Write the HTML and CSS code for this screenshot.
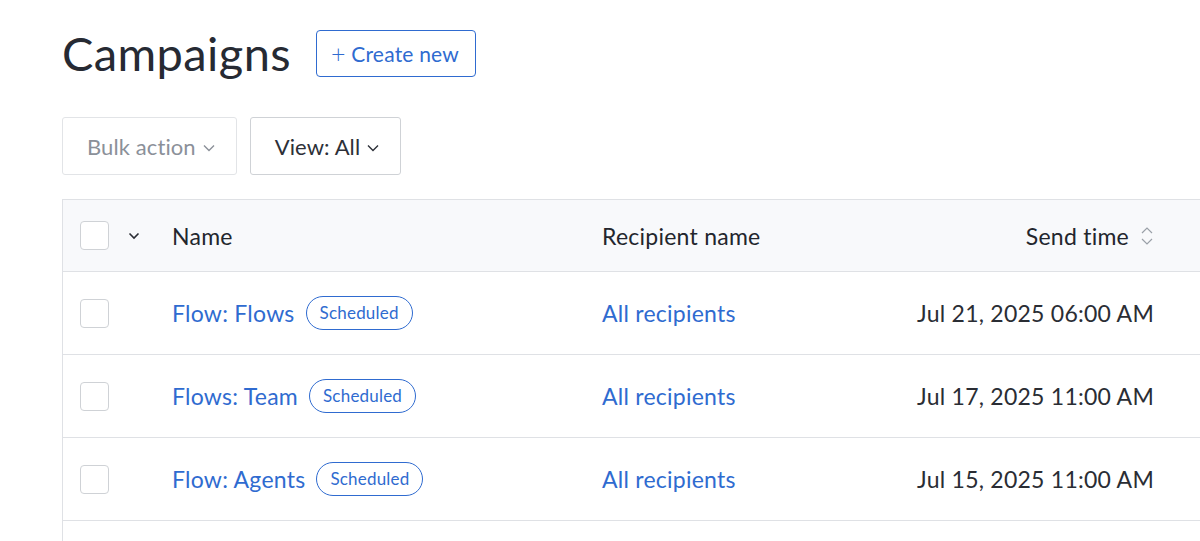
FILE: index.html
```html
<!DOCTYPE html>
<html lang="en">
<head>
    <meta charset="UTF-8">
    <meta name="viewport" content="width=device-width, initial-scale=1.0">
    <title>Campaigns</title>
    <link rel="stylesheet" href="styles.css">
</head>
<body>
    <div class="page">
        <div class="title-row">
            <h1>Campaigns</h1>
            <button class="btn-create"><span class="plus">+</span> Create new</button>
        </div>

        <div class="toolbar">
            <button class="btn-filter disabled">Bulk action
                <svg class="caret" width="12" height="8" viewBox="0 0 12 8"><path d="M1 1.5 L6 6.5 L11 1.5" fill="none" stroke="currentColor" stroke-width="1.4"/></svg>
            </button>
            <button class="btn-filter">View: All
                <svg class="caret" width="12" height="8" viewBox="0 0 12 8"><path d="M1 1.5 L6 6.5 L11 1.5" fill="none" stroke="currentColor" stroke-width="1.4"/></svg>
            </button>
        </div>

        <div class="table">
            <div class="row head">
                <div class="cell select">
                    <span class="checkbox"></span>
                    <span class="select-menu">
                        <svg width="12" height="8" viewBox="0 0 12 8"><path d="M1.5 1.5 L6 6 L10.5 1.5" fill="none" stroke="#2a2d34" stroke-width="1.6"/></svg>
                    </span>
                </div>
                <div class="cell">Name</div>
                <div class="cell">Recipient name</div>
                <div class="cell time">Send time
                    <svg class="sort" width="14" height="22" viewBox="0 0 14 22"><path d="M2 8 L7 3 L12 8 M2 14 L7 19 L12 14" fill="none" stroke="#9aa0a8" stroke-width="1.2"/></svg>
                </div>
            </div>

            <div class="row">
                <div class="cell select"><span class="checkbox"></span></div>
                <div class="cell"><a class="link">Flow: Flows</a><span class="badge">Scheduled</span></div>
                <div class="cell"><a class="link">All recipients</a></div>
                <div class="cell time">Jul 21, 2025 06:00 AM</div>
            </div>
            <div class="row">
                <div class="cell select"><span class="checkbox"></span></div>
                <div class="cell"><a class="link">Flows: Team</a><span class="badge">Scheduled</span></div>
                <div class="cell"><a class="link">All recipients</a></div>
                <div class="cell time">Jul 17, 2025 11:00 AM</div>
            </div>
            <div class="row">
                <div class="cell select"><span class="checkbox"></span></div>
                <div class="cell"><a class="link">Flow: Agents</a><span class="badge">Scheduled</span></div>
                <div class="cell"><a class="link">All recipients</a></div>
                <div class="cell time">Jul 15, 2025 11:00 AM</div>
            </div>
            <div class="row empty"></div>
        </div>
    </div>
</body>
</html>
```

FILE: styles.css
```css
body {
    font-family: Lato, "Noto Sans", sans-serif;
    margin: 0;
    padding: 0;
    overflow: hidden;
    background: #fff;
    color: #2a2d34;
}

.page {
    padding: 21px 0 0 62px;
}

.title-row {
    display: flex;
    align-items: center;
    gap: 25px;
    height: 64px;
}

h1 {
    margin: 0;
    font-size: 47px;
    font-weight: 400;
    color: #262a33;
    letter-spacing: 0.4px;
}

button {
    font-family: inherit;
    cursor: pointer;
    background: #fff;
}

.btn-create {
    height: 47px;
    padding: 0 16px 0 14px;
    border: 1.5px solid #2f6bd0;
    border-radius: 4px;
    color: #2f6bd0;
    font-size: 21px;
    letter-spacing: 0.2px;
}

.btn-create .plus {
    font-size: 25px;
    font-weight: 300;
    vertical-align: -1px;
}

.toolbar {
    display: flex;
    gap: 13px;
    margin-top: 32px;
}

.btn-filter {
    display: flex;
    align-items: center;
    gap: 7px;
    height: 58px;
    padding: 0 21px 0 24px;
    border: 1.5px solid #cfd2d6;
    border-radius: 3px;
    color: #2d3038;
    font-size: 22px;
    letter-spacing: 0.1px;
}

.btn-filter.disabled {
    color: #8b9099;
    border-color: #e2e4e7;
}

.btn-filter .caret {
    margin-top: 3px;
}

.table {
    margin-top: 24px;
    width: 1200px;
    border-left: 1.5px solid #dfe1e5;
    border-top: 1.5px solid #dfe1e5;
}

.row {
    display: grid;
    grid-template-columns: 109px 430px 290px 262px 1fr;
    align-items: center;
    height: 82px;
    border-bottom: 1.5px solid #dfe1e5;
    font-size: 23px;
    letter-spacing: 0.25px;
}

.row.head {
    height: 71px;
    background: #f8f9fb;
    color: #23262d;
}

.row.empty {
    border-bottom: none;
}

.cell {
    display: flex;
    align-items: center;
}

.cell.select {
    padding-left: 17px;
    gap: 11px;
}

.cell.time {
    justify-content: flex-end;
}

.head .cell.time {
    gap: 11px;
}

.checkbox {
    width: 27px;
    height: 27px;
    border: 1.5px solid #cfd2d6;
    border-radius: 4px;
    background: #fff;
}

.select-menu {
    display: flex;
    align-items: center;
    justify-content: center;
    width: 28px;
    height: 34px;
}

.link {
    color: #2f6bd0;
}

.badge {
    margin-left: 11px;
    padding: 5px 13px 6px;
    border: 1.5px solid #2f6bd0;
    border-radius: 18px;
    color: #2f6bd0;
    font-size: 17px;
    letter-spacing: 0.2px;
}
```
